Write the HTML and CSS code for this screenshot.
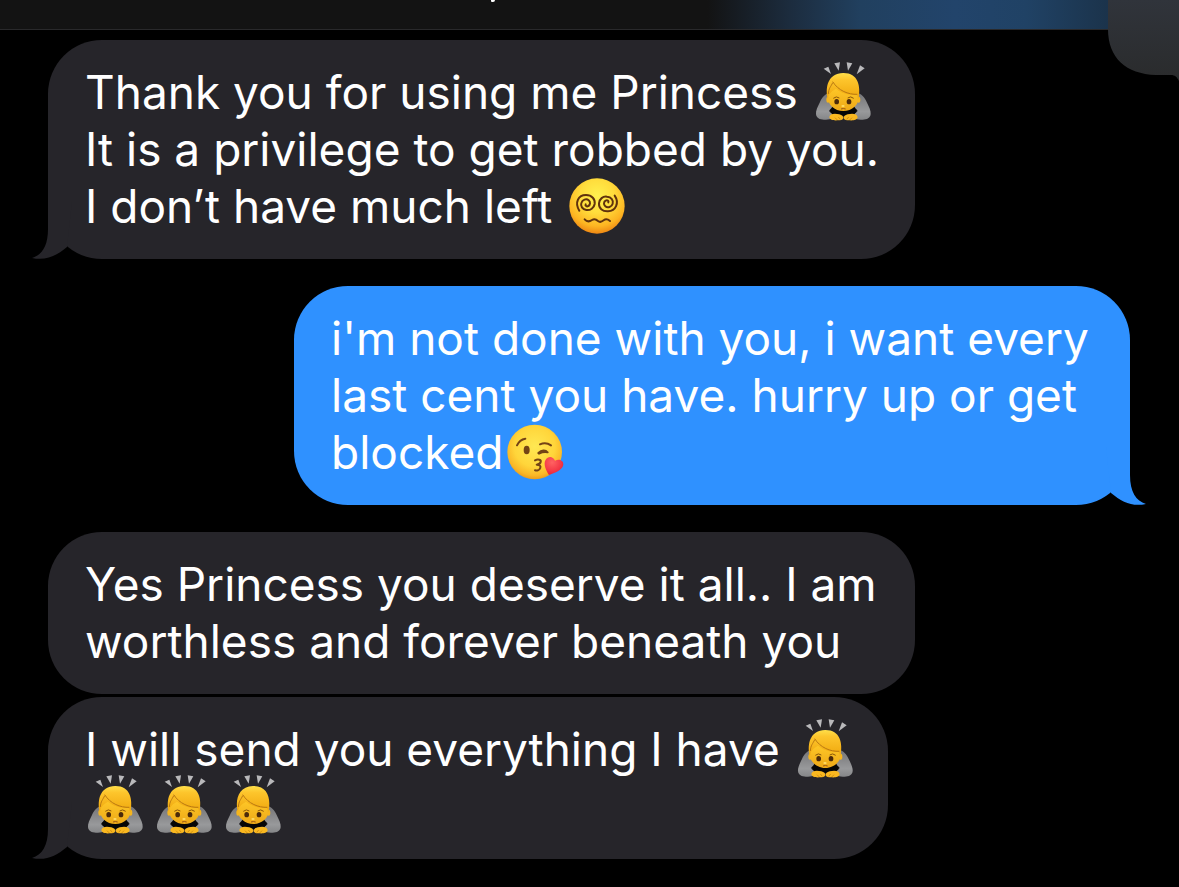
FILE: index.html
```html
<!DOCTYPE html>
<html lang="en">
<head>
    <meta charset="UTF-8">
    <meta name="viewport" content="width=device-width, initial-scale=1.0">
    <title>Messages</title>
    <link rel="stylesheet" href="styles.css">
</head>
<body>
    <!-- shared emoji and bubble tail shapes -->
    <svg class="defs" aria-hidden="true">
        <defs>
            <linearGradient id="hair" x1="0" y1="0" x2="0" y2="1">
                <stop offset="0" stop-color="#ffdf4a"/>
                <stop offset="0.25" stop-color="#fdc52c"/>
                <stop offset="1" stop-color="#efa60c"/>
            </linearGradient>
            <linearGradient id="skin" x1="0" y1="0" x2="0" y2="1">
                <stop offset="0" stop-color="#ffc928"/>
                <stop offset="1" stop-color="#eda817"/>
            </linearGradient>
            <linearGradient id="sleeve" x1="0" y1="0" x2="0" y2="1">
                <stop offset="0" stop-color="#747476"/>
                <stop offset="0.7" stop-color="#98999b"/>
                <stop offset="1" stop-color="#858688"/>
            </linearGradient>
            <radialGradient id="face" cx="0.5" cy="0.32" r="0.68">
                <stop offset="0" stop-color="#fff14f"/>
                <stop offset="0.45" stop-color="#ffdc3c"/>
                <stop offset="0.8" stop-color="#fdb522"/>
                <stop offset="1" stop-color="#ee8713"/>
            </radialGradient>
            <radialGradient id="face-soft" cx="0.5" cy="0.4" r="0.62">
                <stop offset="0" stop-color="#ffe853"/>
                <stop offset="0.6" stop-color="#ffd53a"/>
                <stop offset="0.85" stop-color="#fab727"/>
                <stop offset="1" stop-color="#e89518"/>
            </radialGradient>
            <radialGradient id="heart" cx="0.4" cy="0.3" r="0.8">
                <stop offset="0" stop-color="#ff6262"/>
                <stop offset="0.6" stop-color="#f43846"/>
                <stop offset="1" stop-color="#d91d35"/>
            </radialGradient>
        </defs>

        <symbol id="bow" viewBox="33 36 180 180">
            <g fill="#b9b9bb">
                <path d="M65 56l14-6 8 22z"/>
                <path d="M97 40l17-3-4 25z"/>
                <path d="M134 37l17 3-13 22z"/>
                <path d="M174 46l14 9-24 18z"/>
            </g>
            <path d="M76 160h96l-14 38H90z" fill="#060606"/>
            <path d="M86 128c-17 2-26 14-32 28-7 14-13 27-12 36 1 12 11 17 24 17 8 0 16-1 22-3l2-14c-4-5-10-6-8-11 8-6 12-14 12-24z" fill="url(#sleeve)"/>
            <path d="M162 128c17 2 26 14 32 28 7 14 13 27 12 36-1 12-11 17-24 17-8 0-16-1-22-3l-2-14c4-5 10-6 8-11-8-6-12-14-12-24z" fill="url(#sleeve)"/>
            <path d="M78 140c-3 22 20 43 46 43s49-21 46-43l-2-30H80z" fill="url(#skin)"/>
            <ellipse cx="78" cy="149" rx="5" ry="9" fill="#f5b51e"/>
            <ellipse cx="170" cy="149" rx="5" ry="9" fill="#f5b51e"/>
            <path d="M77 146c-8-36 2-76 46-77 45-1 55 39 46 79-2-8-2-10-6-14-20 3-44-4-61-18-9 7-20 9-25 30z" fill="url(#hair)"/>
            <path d="M92 95c17 27 47 39 74 38M92 98c-5 12-12 16-13 34" fill="none" stroke="#b97812" stroke-width="3"/>
            <path d="M94 145q9-8 18-1M137 144q9-7 18 1" fill="none" stroke="#8a5609" stroke-width="3"/>
            <ellipse cx="104" cy="155" rx="7" ry="8" fill="#4b2a0b"/>
            <ellipse cx="141" cy="155" rx="7" ry="8" fill="#4b2a0b"/>
            <ellipse cx="123" cy="168" rx="5" ry="3" fill="#ffdc67"/>
            <path d="M117 177q7-3 14 0" fill="none" stroke="#995717" stroke-width="3"/>
            <path d="M82 202c1-11 15-13 30-9 8 2 13 6 12 12-3 6-9 6-14 6-12 1-26 1-28-9z" fill="#f9b820"/>
            <path d="M167 202c-1-11-15-13-30-9-8 2-13 6-12 12 3 6 9 6 14 6 12 1 26 1 28-9z" fill="#f9b820"/>
            <path d="M99 203l7 7M109 201l6 7M150 203l-7 7M140 201l-6 7" stroke="#bd7b0b" stroke-width="2"/>
        </symbol>

        <symbol id="dizzy" viewBox="27 18 180 180">
            <circle cx="117" cy="108" r="83" fill="url(#face)"/>
            <g fill="none" stroke="#60320d" stroke-width="6" stroke-linecap="round">
                <path d="M64 122C49 97 61 75 84 75c18 0 28 13 26 27-2 12-13 20-25 18-12-2-18-12-15-21 3-10 15-14 22-8 6 5 5 14-1 17-5 3-10-1-8-5"/>
                <path d="M170 77c15 22 3 46-20 47-17 1-28-10-27-24 1-13 12-22 24-20 13 1 20 11 17 21-3 10-15 14-22 8-6-5-5-14 1-17 5-3 10 1 8 5"/>
                <path d="M80 148c7 8 15 7 22 2 7-5 13-2 18 3 7 6 12 2 17-2 6-5 12-4 19 2"/>
            </g>
        </symbol>

        <symbol id="kiss" viewBox="30 21 180 180">
            <circle cx="119" cy="111" r="82" fill="url(#face-soft)"/>
            <ellipse cx="95" cy="105" rx="9" ry="13" fill="#744315"/>
            <g fill="none" stroke="#744315" stroke-width="6" stroke-linecap="round" stroke-linejoin="round">
                <path d="M66 91c5-11 13-18 25-20"/>
                <path d="M135 88c11-5 23-4 33 3"/>
                <path d="M130 114c10-9 21-10 28-2-9-2-18 0-26 4"/>
                <path d="M120 136c10-5 19-1 17 5-1 5-7 7-12 8 8 0 13 4 11 9-2 7-9 10-16 8"/>
            </g>
            <path d="M162 180c-9-14-18-34-10-46 7-11 22-11 28 3 12-6 25-1 25 11 0 15-23 26-43 32z" fill="url(#heart)"/>
        </symbol>

        <symbol id="tail" viewBox="0 0 48 58">
            <path d="M16 0v28c0 17-6 26-16 29 14 3 24-2 35-11l5-46z" fill="currentColor"/>
        </symbol>
    </svg>

    <header class="topbar">
        <span class="topbar-mark"></span>
    </header>
    <svg class="corner" viewBox="0 0 71 82" aria-hidden="true">
        <defs>
            <linearGradient id="corner-fill" x1="0" y1="0" x2="0" y2="1">
                <stop offset="0" stop-color="#30343b"/>
                <stop offset="1" stop-color="#2a2b2c"/>
            </linearGradient>
        </defs>
        <path d="M0 0h71v81c-2-4-4-6-8-6H48C18 74 0 58 0 29z" fill="url(#corner-fill)"/>
    </svg>

    <main class="chat">
        <div class="bubble received wide">
            Thank you for using me Princess <svg class="emoji" role="img" aria-label="person bowing"><use href="#bow"/></svg><br>
            It is a privilege to get robbed by you.<br>
            I don’t have much left <svg class="emoji" role="img" aria-label="dizzy face"><use href="#dizzy"/></svg>
            <svg class="tail" aria-hidden="true"><use href="#tail"/></svg>
        </div>

        <div class="bubble sent">
            i'm not done with you, i want every<br>
            last cent you have. hurry up or get<br>
            blocked<svg class="emoji" role="img" aria-label="face blowing a kiss"><use href="#kiss"/></svg>
            <svg class="tail" aria-hidden="true"><use href="#tail"/></svg>
        </div>

        <div class="bubble received wide">
            Yes Princess you deserve it all.. I am<br>
            worthless and forever beneath you
        </div>

        <div class="bubble received follow">
            I will send you everything I have <svg class="emoji" role="img" aria-label="person bowing"><use href="#bow"/></svg><br>
            <span class="emoji-row">
                <svg class="emoji" role="img" aria-label="person bowing"><use href="#bow"/></svg>
                <svg class="emoji" role="img" aria-label="person bowing"><use href="#bow"/></svg>
                <svg class="emoji" role="img" aria-label="person bowing"><use href="#bow"/></svg>
            </span>
            <svg class="tail" aria-hidden="true"><use href="#tail"/></svg>
        </div>
    </main>
</body>
</html>
```

FILE: styles.css
```css
* {
    box-sizing: border-box;
}

body {
    margin: 0;
    background: #000;
    color: #fff;
    font-family: Inter, "Liberation Sans", sans-serif;
    font-size: 46px;
    line-height: 57px;
    position: relative;
}

.defs {
    position: absolute;
    width: 0;
    height: 0;
}

.topbar {
    height: 30px;
    border-bottom: 1px solid #29292b;
    background: linear-gradient(90deg, #131313 0%, #131313 60%, #1c2c3e 67%, #21405f 73%, #22446b 81%, #204265 87%, #1b334b 94%);
}

.topbar-mark {
    display: block;
    width: 4px;
    height: 2px;
    margin: 0 auto;
    position: relative;
    left: -97px;
    background: #fff;
    border-radius: 0 0 2px 1px;
}

.corner {
    position: absolute;
    top: 0;
    right: 0;
    width: 71px;
    height: 82px;
}

.chat {
    display: flex;
    flex-direction: column;
    align-items: flex-start;
    padding: 10px 49px 28px 48px;
}

.bubble {
    position: relative;
    width: 100%;
    padding: 24px 0 24px 37px;
    border-radius: 54px;
    white-space: nowrap;
}

.received {
    max-width: 840px;
    background: #26252a;
    color: #fff;
}

.wide {
    max-width: 867px;
}

.sent {
    align-self: flex-end;
    max-width: 836px;
    margin: 27px 0;
    background: #2f91ff;
}

.follow {
    margin-top: 3px;
}

.emoji {
    width: 60px;
    height: 60px;
    margin: -4px 0 -4px 2px;
    vertical-align: -9px;
}

.emoji-row {
    display: inline-flex;
    gap: 9px;
    height: 57px;
    vertical-align: top;
}

.emoji-row .emoji {
    margin: -3px 0;
}

/* tail hangs out of the lower corner */
.tail {
    position: absolute;
    left: -16px;
    bottom: 0;
    width: 48px;
    height: 58px;
    color: #26252a;
}

.sent .tail {
    left: auto;
    right: -16px;
    color: #2f91ff;
    transform: scaleX(-1);
}
```
